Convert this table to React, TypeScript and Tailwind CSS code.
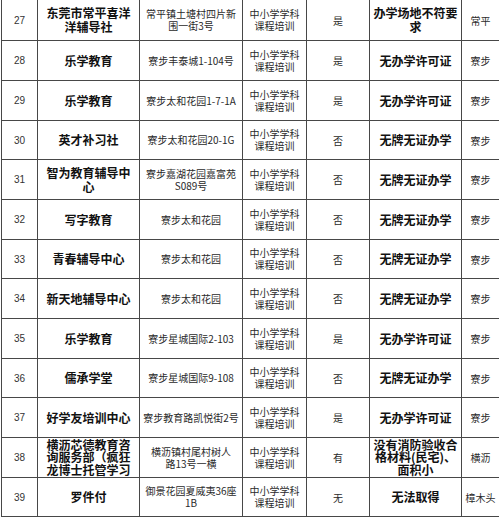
import React from "react";

type Row = {
  no: string;
  name: string;
  addr: string;
  yn: string;
  issue: string;
  region: string;
  h: string;
  lead: string;
};

const rows: Row[] = [
  { no: "27", name: "东莞市常平喜洋\n洋辅导社", addr: "常平镇土塘村四片新\n围一街3号", yn: "是", issue: "办学场地不符要\n求", region: "常平", h: "h-[41px]", lead: "leading-[14px]" },
  { no: "28", name: "乐学教育", addr: "寮步丰泰城1-104号", yn: "是", issue: "无办学许可证", region: "寮步", h: "h-[40px]", lead: "leading-[14px]" },
  { no: "29", name: "乐学教育", addr: "寮步太和花园1-7-1A", yn: "是", issue: "无办学许可证", region: "寮步", h: "h-[40px]", lead: "leading-[14px]" },
  { no: "30", name: "英才补习社", addr: "寮步太和花园20-1G", yn: "否", issue: "无牌无证办学", region: "寮步", h: "h-[39px]", lead: "leading-[14px]" },
  { no: "31", name: "智为教育辅导中\n心", addr: "寮步嘉湖花园嘉富苑\nS089号", yn: "否", issue: "无牌无证办学", region: "寮步", h: "h-[40px]", lead: "leading-[14px]" },
  { no: "32", name: "写字教育", addr: "寮步太和花园", yn: "否", issue: "无牌无证办学", region: "寮步", h: "h-[40px]", lead: "leading-[14px]" },
  { no: "33", name: "青春辅导中心", addr: "寮步太和花园", yn: "否", issue: "无牌无证办学", region: "寮步", h: "h-[39px]", lead: "leading-[14px]" },
  { no: "34", name: "新天地辅导中心", addr: "寮步太和花园", yn: "否", issue: "无牌无证办学", region: "寮步", h: "h-[40px]", lead: "leading-[14px]" },
  { no: "35", name: "乐学教育", addr: "寮步星城国际2-103", yn: "是", issue: "无办学许可证", region: "寮步", h: "h-[40px]", lead: "leading-[14px]" },
  { no: "36", name: "儒承学堂", addr: "寮步星城国际9-108", yn: "否", issue: "无牌无证办学", region: "寮步", h: "h-[39px]", lead: "leading-[14px]" },
  { no: "37", name: "好学友培训中心", addr: "寮步教育路凯悦街2号", yn: "是", issue: "无办学许可证", region: "寮步", h: "h-[40px]", lead: "leading-[14px]" },
  { no: "38", name: "横沥芯德教育咨\n询服务部（疯狂\n龙博士托管学习", addr: "横沥镇村尾村树人\n路13号一横", yn: "有", issue: "没有消防验收合\n格材料(民宅)、\n面积小", region: "横沥", h: "h-[40px]", lead: "leading-[12.5px]" },
  { no: "39", name: "罗件付", addr: "御景花园夏威夷36座\n1B", yn: "无", issue: "无法取得", region: "樟木头", h: "h-[39px]", lead: "leading-[14px]" },
];

const cell =
  "flex items-center justify-center text-center overflow-hidden border-b border-r border-[#474747] whitespace-pre-line";

export default function App() {
  return (
    <div
      className="w-[500px] h-[518px] bg-white overflow-hidden"
      style={{ fontFamily: '"Noto Sans CJK SC", "Noto Sans", sans-serif' }}
    >
      <div className="ml-[1px] flex flex-col">
        {rows.map((r) => (
          <div
            key={r.no}
            className={`grid grid-cols-[37px_102px_103px_64px_63px_92px_37px] ${r.h}`}
          >
            <div
              className={`${cell} border-l text-[10px] text-[#333]`}
              style={{ fontFamily: '"Liberation Sans", Arial, sans-serif' }}
            >
              {r.no}
            </div>
            <div className={`${cell} text-[12px] ${r.lead} font-bold text-[#111]`}>
              {r.name}
            </div>
            <div className={`${cell} text-[10px] leading-[12px] text-[#2a2a2a]`}>
              {r.addr}
            </div>
            <div className={`${cell} text-[10px] leading-[12px] text-[#2a2a2a]`}>
              {"中小学学科\n课程培训"}
            </div>
            <div className={`${cell} text-[10px] text-[#2a2a2a]`}>{r.yn}</div>
            <div className={`${cell} text-[12px] ${r.lead} font-bold text-[#111]`}>
              {r.issue}
            </div>
            <div className="flex items-center justify-center overflow-hidden border-b border-[#474747] text-[10px] text-[#2a2a2a] whitespace-nowrap">
              {r.region}
            </div>
          </div>
        ))}
      </div>
    </div>
  );
}
